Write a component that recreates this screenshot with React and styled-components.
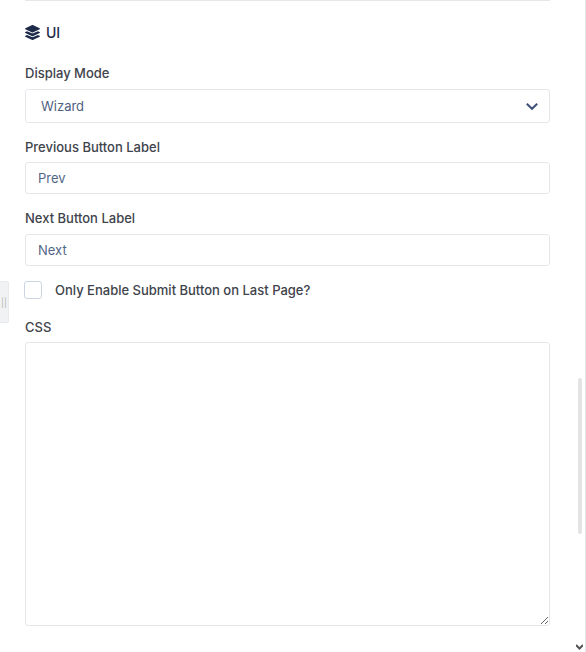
import React from 'react';
import styled, { createGlobalStyle } from 'styled-components';
import { FaLayerGroup } from 'react-icons/fa';

const GlobalStyle = createGlobalStyle`
  html, body {
    margin: 0;
    padding: 0;
    height: 652px;
    overflow: hidden;
    background: #fff;
    font-family: Inter, "Liberation Sans", sans-serif;
  }
`;

const Page = styled.div`
  position: relative;
  width: 586px;
  height: 652px;
  overflow: hidden;
`;

const Form = styled.div`
  display: flex;
  flex-direction: column;
  width: 525px;
  margin-left: 25px;
`;

const Rule = styled.div`
  height: 1px;
  background: #e5e7eb;
`;

const SectionTitle = styled.h3`
  display: flex;
  align-items: center;
  gap: 6px;
  margin: 22px 0 24px;
  height: 18px;
  font-size: 14px;
  font-weight: 500;
  color: #1e2a4a;
`;

const Label = styled.label`
  display: block;
  margin-bottom: ${(p) => p.$gap}px;
  height: 16px;
  line-height: 16px;
  font-size: 13px;
  font-weight: 500;
  color: #40434b;
`;

const Field = styled.div`
  margin-bottom: ${(p) => p.$gap}px;
`;

const SelectBox = styled.div`
  display: flex;
  align-items: center;
  justify-content: space-between;
  box-sizing: border-box;
  height: 34px;
  padding: 0 10px 0 15px;
  border: 1px solid #e5e7eb;
  border-radius: 3px;
  font-size: 13px;
  color: #4f5f82;
`;

const TextInput = styled.input`
  display: block;
  box-sizing: border-box;
  width: 100%;
  height: 32px;
  padding: 0 12px;
  border: 1px solid #e5e7eb;
  border-radius: 3px;
  outline: none;
  font-family: inherit;
  font-size: 13px;
  color: #526788;
`;

const CheckRow = styled.div`
  display: flex;
  align-items: center;
  gap: 13px;
  height: 18px;
  margin-bottom: 20px;
  margin-left: -1px;
`;

const CheckBox = styled.input.attrs({ type: 'checkbox' })`
  appearance: none;
  width: 18px;
  height: 18px;
  margin: 0;
  border: 1px solid #cbd5e1;
  border-radius: 3px;
  background: #fff;
`;

const CheckText = styled.span`
  font-size: 13px;
  font-weight: 500;
  color: #40434b;
`;

const CssArea = styled.textarea`
  display: block;
  box-sizing: border-box;
  width: 100%;
  height: 284px;
  padding: 8px 12px;
  border: 1px solid #e5e7eb;
  border-radius: 3px;
  outline: none;
`;

const Handle = styled.div`
  position: absolute;
  left: 0;
  top: 281px;
  display: flex;
  align-items: center;
  justify-content: center;
  box-sizing: border-box;
  width: 9px;
  height: 42px;
  background: #f1f2f4;
  border: 1px solid #e8e9ec;
  border-left: 0;
  border-radius: 0 2px 2px 0;
  font-size: 9px;
  color: #b5b5b0;
`;

const ScrollEdge = styled.div`
  position: absolute;
  right: 0;
  top: 0;
  width: 1px;
  height: 652px;
  background: #e5e7eb;
`;

const ScrollThumb = styled.div`
  position: absolute;
  left: 578px;
  top: 378px;
  width: 4px;
  height: 156px;
  border-radius: 2px;
  background: #e3e3e3;
`;

const ScrollArrow = styled.svg`
  position: absolute;
  left: 576px;
  top: 644px;
  width: 7px;
  height: 6px;
`;

const Chevron = () => (
  <svg width="13" height="9" viewBox="0 0 13 9" fill="none">
    <path d="M0.8 1.8 L6 6.8 L11.2 1.8" stroke="#3f4f78" strokeWidth="2" />
  </svg>
);

export default function App() {
  return (
    <>
      <GlobalStyle />
      <Page>
        <Form>
          <Rule />
          <SectionTitle>
            <FaLayerGroup size={15} color="#1e2a4a" />
            UI
          </SectionTitle>
          <Field $gap={16}>
            <Label $gap={8}>Display Mode</Label>
            <SelectBox>
              Wizard
              <Chevron />
            </SelectBox>
          </Field>
          <Field $gap={16}>
            <Label $gap={7}>Previous Button Label</Label>
            <TextInput defaultValue="Prev" />
          </Field>
          <Field $gap={15}>
            <Label $gap={8}>Next Button Label</Label>
            <TextInput defaultValue="Next" />
          </Field>
          <CheckRow>
            <CheckBox />
            <CheckText>Only Enable Submit Button on Last Page?</CheckText>
          </CheckRow>
          <Field $gap={0}>
            <Label $gap={7}>CSS</Label>
            <CssArea />
          </Field>
        </Form>
        <Handle>||</Handle>
        <ScrollEdge />
        <ScrollThumb />
        <ScrollArrow viewBox="0 0 7 6">
          <path d="M0 1 L3.5 4.5 L7 1" stroke="#555" strokeWidth="2" fill="none" />
        </ScrollArrow>
      </Page>
    </>
  );
}
